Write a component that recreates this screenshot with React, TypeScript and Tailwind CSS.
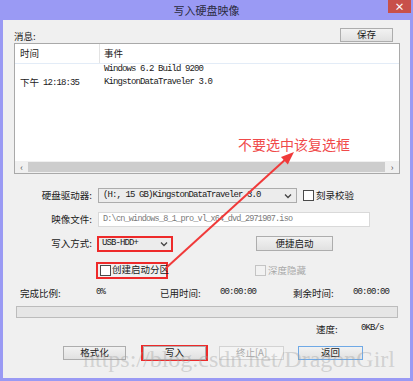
import React from "react";

const cjk = { fontFamily: '"Noto Sans CJK SC", "Noto Sans", sans-serif' };
const mono = { fontFamily: '"Liberation Mono", "DejaVu Sans Mono", "Noto Sans CJK SC", monospace' };

function Btn({
  children,
  className = "",
  disabled = false,
}: {
  children: React.ReactNode;
  className?: string;
  disabled?: boolean;
}) {
  return (
    <button
      type="button"
      className={
        "flex h-[14px] items-center justify-center whitespace-nowrap border text-[9.5px] leading-none " +
        (disabled
          ? "border-[#d3d3d3] bg-[#f4f4f4] text-[#a8a8a8] "
          : "border-[#adadad] bg-gradient-to-b from-[#f2f2f2] to-[#e1e1e1] text-[#1a1a1a] ") +
        className
      }
    >
      {children}
    </button>
  );
}

function Check({ disabled = false }: { disabled?: boolean }) {
  return (
    <span
      className={
        "block h-[11px] w-[11px] shrink-0 border " +
        (disabled ? "border-[#c4c4c4] bg-[#f2f2f2]" : "border-[#4a4a4a] bg-white")
      }
    />
  );
}

function Chevron() {
  return (
    <svg width="8" height="6" viewBox="0 0 8 6" className="shrink-0">
      <path d="M1 1.5 L4 4.5 L7 1.5" fill="none" stroke="#444" strokeWidth="1.3" />
    </svg>
  );
}

export default function App() {
  return (
    <div className="relative flex h-[381px] w-[413px] flex-col overflow-hidden bg-[#9a9af4] text-[#1a1a1a]" style={cjk}>
      {/* title bar */}
      <div className="relative flex h-[20px] shrink-0 items-center justify-center">
        <span className="text-[11px] leading-none text-[#2a2a40]">写入硬盘映像</span>
        <div className="absolute right-[2px] top-0 flex h-[13px] w-[23px] items-center justify-center bg-[#c8504a] text-[10px] font-bold leading-[13px] text-white">
          ×
        </div>
      </div>

      {/* body */}
      <div className="mx-[3px] mb-[3px] flex flex-1 flex-col bg-[#f0f0f0]">
        <div className="mt-[8px] flex h-[14px] items-end justify-between pl-[11px] pr-[17px]">
          <span className="text-[9.5px] leading-[12px]">消息:</span>
          <Btn className="w-[53px]">保存</Btn>
        </div>

        {/* message list */}
        <div className="ml-[11px] mt-[1px] flex h-[131px] w-[386px] flex-col border border-[#a9a9a9] bg-white">
          <div className="flex h-[20px] shrink-0 border-b border-[#e3ecf7] text-[9.5px]">
            <div className="flex w-[85px] items-center border-r border-[#e3e3e3] pl-[5px]">时间</div>
            <div className="flex items-center pl-[4px]">事件</div>
          </div>
          <div className="flex h-[12px] items-center text-[9px]">
            <div className="w-[85px]" />
            <div className="pl-[4px] tracking-[-0.9px]" style={mono}>Windows 6.2 Build 9200</div>
          </div>
          <div className="flex h-[14px] items-center text-[9px]">
            <div className="flex w-[85px] items-center pl-[5px]">
              <span className="text-[9.5px] leading-none">下午</span>
              <span className="ml-[4px] leading-none tracking-[-0.9px]" style={mono}>12:18:35</span>
            </div>
            <div className="pl-[4px] tracking-[-0.9px]" style={mono}>KingstonDataTraveler 3.0</div>
          </div>
          <div className="flex-1" />
          <div className="flex h-[12px] shrink-0 items-center bg-[#f0f0f0]">
            <span className="flex w-[13px] justify-center text-[9px] leading-none text-[#555]">‹</span>
            <div className="h-[10px] flex-1 bg-[#cdcdcd]" />
            <span className="flex w-[14px] justify-center text-[9px] leading-none text-[#555]">›</span>
          </div>
        </div>

        {/* drive row */}
        <div className="mt-[14px] flex h-[15px] items-center whitespace-nowrap text-[9.5px]">
          <span className="w-[89px] text-right">硬盘驱动器:</span>
          <div className="ml-[6px] flex h-[15px] w-[199px] items-center justify-between border border-[#acacac] bg-[#ececec] pl-[4px] pr-[4px]">
            <span className="text-[9px] tracking-[-0.9px]" style={mono}>(H:, 15 GB)KingstonDataTraveler 3.0</span>
            <Chevron />
          </div>
          <div className="ml-[6px] flex items-center gap-[2px]">
            <Check />
            <span>刻录校验</span>
          </div>
        </div>

        {/* file row */}
        <div className="mt-[9px] flex h-[15px] items-center whitespace-nowrap text-[9.5px]">
          <span className="w-[89px] text-right">映像文件:</span>
          <div className="ml-[6px] flex h-[15px] w-[272px] items-center border border-[#d9d9d9] bg-white pl-[4px]">
            <span className="text-[8.5px] tracking-[-0.8px] text-[#7a7a7a]" style={mono}>D:\cn_windows_8_1_pro_vl_x64_dvd_2971907.iso</span>
          </div>
        </div>

        {/* mode row */}
        <div className="mt-[9px] flex h-[15px] items-center whitespace-nowrap text-[9.5px]">
          <span className="w-[89px] text-right">写入方式:</span>
          <div className="ml-[5px] flex h-[16px] w-[76px] items-center justify-between border-2 border-[#ee2a2a] bg-[#ececec] pl-[3px] pr-[3px]">
            <span className="text-[9px] tracking-[-0.9px]" style={mono}>USB-HDD+</span>
            <Chevron />
          </div>
          <Btn className="ml-[83px] h-[15px] w-[77px]">便捷启动</Btn>
        </div>

        {/* checkbox row */}
        <div className="mt-[11px] flex h-[16px] items-center whitespace-nowrap text-[9.5px]">
          <div className="ml-[93px] flex h-[17px] w-[72px] items-center gap-[1px] border-2 border-[#ee2a2a] pl-[2px]">
            <Check />
            <span className="leading-none">创建启动分区</span>
          </div>
          <div className="ml-[87px] flex items-center gap-[2px] text-[#a8a8a8]">
            <Check disabled />
            <span>深度隐藏</span>
          </div>
        </div>

        {/* progress labels */}
        <div className="mt-[9px] flex h-[12px] items-center whitespace-nowrap pl-[17px] text-[9.5px]">
          <span className="w-[76px]">完成比例:</span>
          <span className="w-[64px] text-[9px] tracking-[-0.9px]" style={mono}>0%</span>
          <span className="w-[60px]">已用时间:</span>
          <span className="w-[73px] text-[9px] tracking-[-0.9px]" style={mono}>00:00:00</span>
          <span className="w-[60px]">剩余时间:</span>
          <span className="text-[9px] tracking-[-0.9px]" style={mono}>00:00:00</span>
        </div>

        <div className="ml-[13px] mt-[7px] h-[12px] w-[382px] border border-[#bcbcbc] bg-[#e6e6e6]" />

        <div className="mt-[5px] flex h-[12px] items-center whitespace-nowrap pl-[313px] text-[9.5px]">
          <span className="w-[45px]">速度:</span>
          <span className="text-[9px] tracking-[-0.9px]" style={mono}>0KB/s</span>
        </div>

        {/* buttons */}
        <div className="mt-[10px] flex h-[16px] items-center pl-[60px]">
          <Btn className="w-[63px]">格式化</Btn>
          <div className="ml-[15px] flex h-[16px] w-[67px] items-center justify-center border-2 border-[#ee2a2a]">
            <Btn className="h-[12px] w-[63px]">写入</Btn>
          </div>
          <Btn disabled className="ml-[11px] w-[65px]">
            终止[A]
          </Btn>
          <Btn className="ml-[14px] w-[65px] !border-[#6fa9e6]">返回</Btn>
        </div>
      </div>

      {/* annotation */}
      <span className="absolute left-[238px] top-[137px] whitespace-nowrap text-[14px] leading-[14px] text-[#f04a4a]">不要选中该复选框</span>
      <svg className="pointer-events-none absolute left-0 top-0" width="413" height="381">
        <line x1="166" y1="268" x2="287" y2="158" stroke="#f03a3a" strokeWidth="2" />
        <polygon points="294,152 287.8,164.4 281,157" fill="#f03a3a" />
      </svg>

      {/* watermark */}
      <span
        className="pointer-events-none absolute left-[83px] top-[347px] whitespace-nowrap text-[24px] leading-[24px] text-[rgba(160,160,160,0.4)]"
        style={{ fontFamily: '"Liberation Serif", serif' }}
      >
        https://blog.csdn.net/DragonGirl
      </span>
    </div>
  );
}
